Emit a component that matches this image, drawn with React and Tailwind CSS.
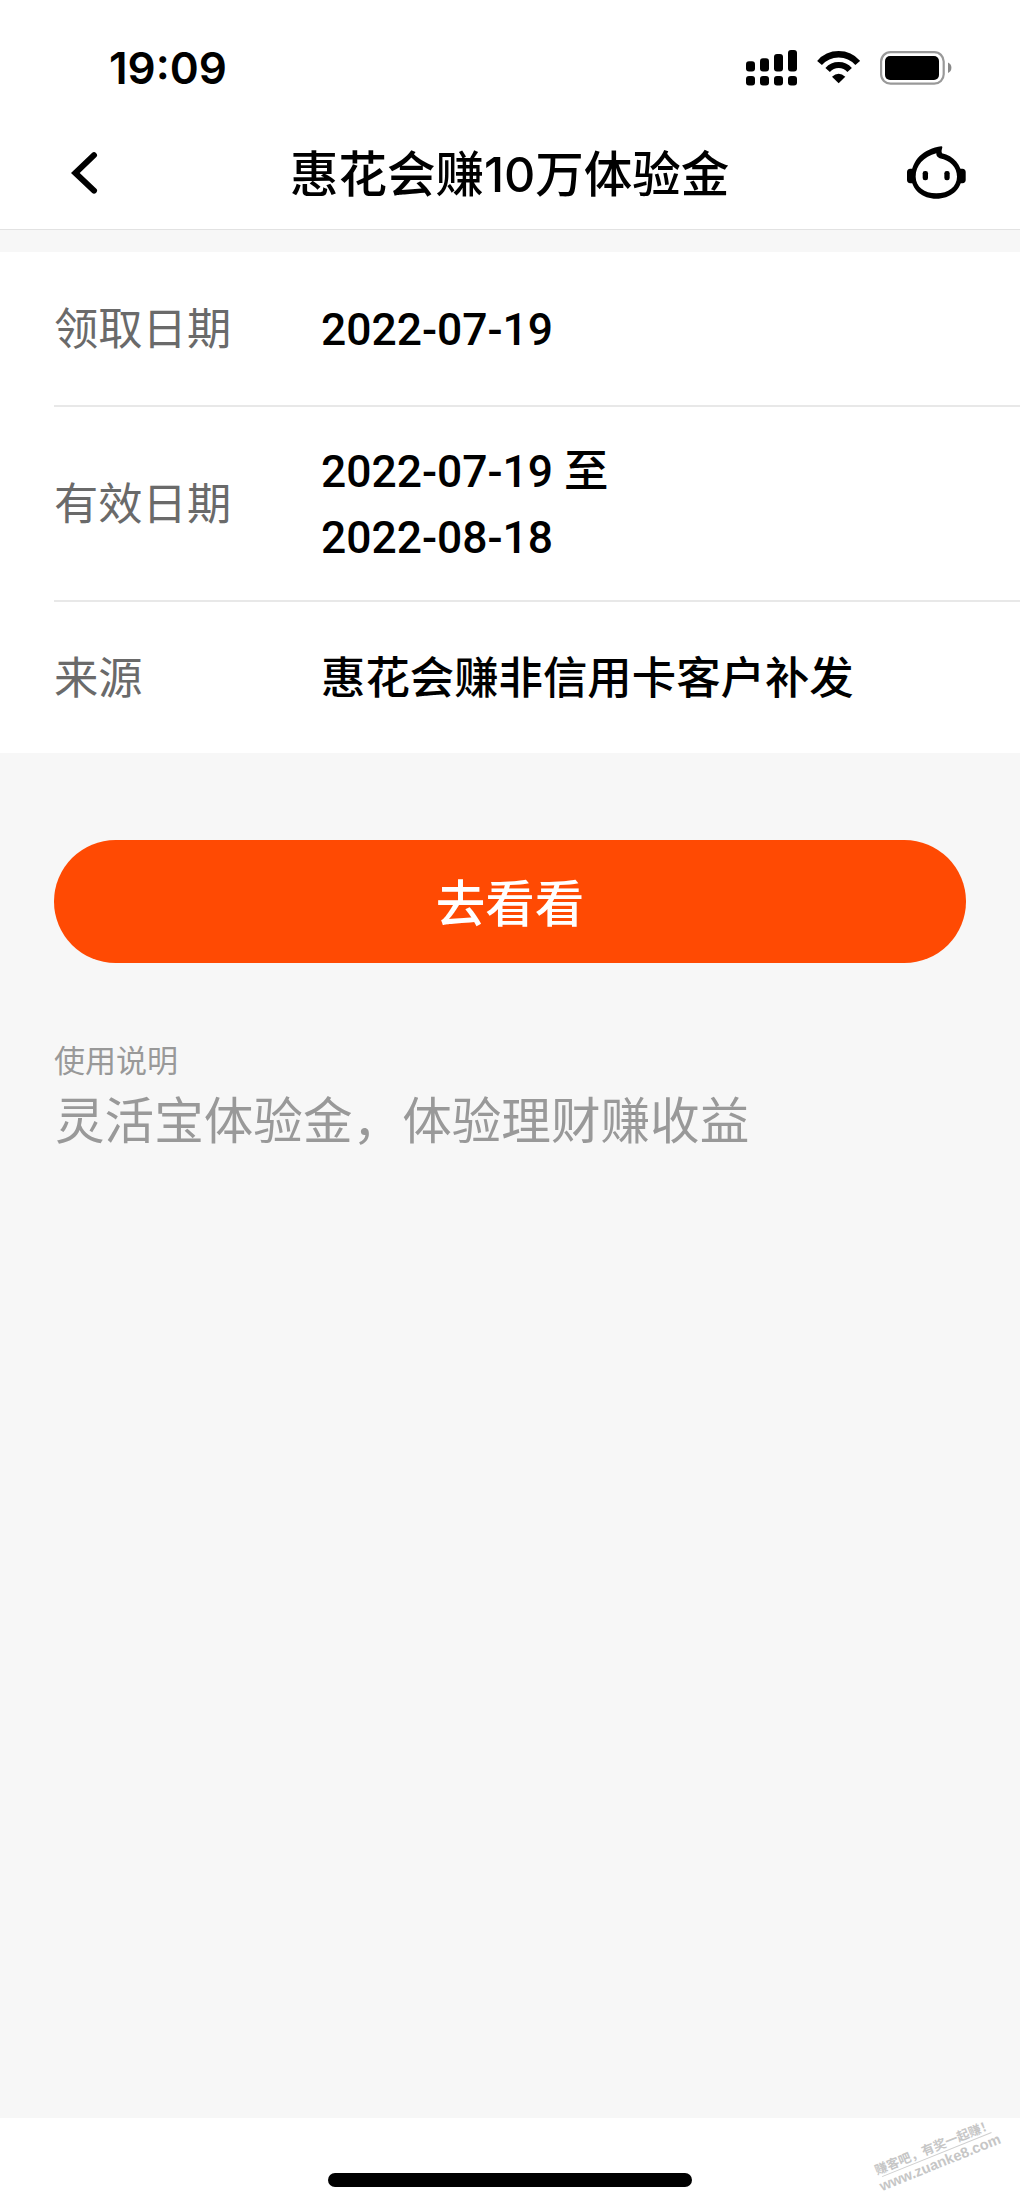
const rows = [
  { label: '领取日期', lines: ['2022-07-19'], height: 'h-[155px] border-b-2' },
  { label: '有效日期', lines: ['2022-07-19 至', '2022-08-18'], height: 'h-[195px] border-b-2' },
  { label: '来源', lines: ['惠花会赚非信用卡客户补发'], height: 'h-[151px]' },
]

function SignalIcon() {
  return (
    <svg width="51" height="36" viewBox="0 0 51 36">
      <rect x="0" y="11.3" width="9" height="10.2" rx="3" />
      <rect x="14" y="8.3" width="9" height="13.2" rx="3" />
      <rect x="28" y="4" width="9" height="17.5" rx="3" />
      <rect x="42" y="0" width="9" height="21.5" rx="3" />
      {[0, 14, 28, 42].map(x => (
        <rect key={x} x={x} y="26" width="9" height="9.4" rx="3" />
      ))}
    </svg>
  )
}

function WifiIcon() {
  return (
    <svg width="43.3" height="32.3" viewBox="0 0 130 97" fill="none" stroke="#000">
      <path d="M7.6 36A76 76 0 0 1 122.4 36" strokeWidth="19" />
      <path d="M32 57A44 44 0 0 1 98 57" strokeWidth="18" />
      <path d="M65 97L45 77Q65 60 85 77Z" fill="#000" stroke="none" />
    </svg>
  )
}

function BatteryIcon() {
  return (
    <svg width="72" height="34" viewBox="0 0 72 34">
      <rect x="1.1" y="1.1" width="62.6" height="31.6" rx="9.5" fill="none" stroke="#999" strokeWidth="2.2" />
      <rect x="5" y="5" width="54" height="24" rx="5" />
      <path d="M68 11.5Q71.4 13 71.4 16.8Q71.4 20.5 68 22Z" fill="#888" />
    </svg>
  )
}

function ServiceIcon() {
  return (
    <svg width="58.7" height="52.7" viewBox="0 0 176 158">
      <path
        fillRule="evenodd"
        d="M103 1C50 8 13 42 13 92C13 132 47 158 88 158C129 158 164 132 164 92C164 56 140 30 105 22C102 15 105 10 106 4Q106 1 103 1ZM88 22C87 29 91 34 98 37C130 43 150 64 150 92C150 122 124 142 88 142C52 142 26 122 26 92C26 58 50 33 88 22Z"
      />
      <path d="M22 68H10Q0 69 0 78V102Q0 111 10 112H22ZM154 68H166Q176 69 176 78V102Q176 111 166 112H154Z" />
      <rect x="47" y="75" width="16" height="28" rx="7" />
      <rect x="112" y="75" width="16" height="28" rx="7" />
    </svg>
  )
}

export default function App() {
  return (
    <div className="relative flex h-[2207px] w-[1020px] flex-col overflow-hidden bg-[#f7f7f7] font-['Inter','Noto_Sans_CJK_SC',sans-serif] text-black">
      <header className="flex h-[230px] shrink-0 flex-col border-b border-[#e2e2e2] bg-white">
        <div className="flex h-[135px] items-center pl-[109px] pr-[68px]">
          <span className="pt-px text-[44px] font-semibold leading-none">19:09</span>
          <div className="ml-auto flex items-center">
            <SignalIcon />
            <div className="mx-5"><WifiIcon /></div>
            <BatteryIcon />
          </div>
        </div>
        <div className="flex h-[75px] items-center justify-between pl-[71px] pr-[54px]">
          <svg width="41" height="42" viewBox="0 0 41 42" fill="none" stroke="#000" strokeWidth="6" strokeLinecap="round">
            <path d="M23 3.2L4.3 21L23 38.6" />
          </svg>
          <h1 className="pt-[5px] text-[48.5px] font-medium leading-none">惠花会赚10万体验金</h1>
          <ServiceIcon />
        </div>
      </header>

      <section className="mt-[22px] bg-white pl-[54px]">
        {rows.map(row => (
          <div key={row.label} className={`flex items-center border-[#e8e8e8] ${row.height}`}>
            <div className="w-[267px] text-[44.3px] leading-[66px] text-[#6a6a6a]">{row.label}</div>
            <div className="pt-[2px] font-['Roboto','Noto_Sans_CJK_SC',sans-serif] text-[44.4px] font-medium leading-[66px]">
              {row.lines.map(line => <div key={line}>{line}</div>)}
            </div>
          </div>
        ))}
      </section>

      <div className="flex flex-col px-[54px] pt-[87px]">
        <button className="h-[123px] rounded-full bg-[#ff4a03] pt-[6px] text-[49.5px] font-medium leading-none text-white">去看看</button>
        <p className="mt-[75px] text-[31px] leading-[46px] text-[#999]">使用说明</p>
        <p className="pl-px text-[49.6px] leading-[74px] text-[#999]">灵活宝体验金，体验理财赚收益</p>
      </div>

      <footer className="mt-auto flex h-[89px] justify-center bg-white pt-[55px]">
        <div className="h-[14px] w-[364px] rounded-full bg-black" />
      </footer>

      {/* site stamp in the corner */}
      <div className="absolute left-[878px] top-[2138px] flex w-[118px] -rotate-[22deg] flex-col items-center font-bold text-[#c6c6c6]">
        <span className="flex h-[17px] w-full justify-center whitespace-nowrap border-b border-[#cfcfcf] font-['Noto_Sans_CJK_SC',sans-serif] text-[12.6px] leading-[16px]">赚客吧，有奖一起赚！</span>
        <span className="font-['Liberation_Sans',sans-serif] text-[14.6px] leading-[17px]">www.zuanke8.com</span>
      </div>
    </div>
  )
}
